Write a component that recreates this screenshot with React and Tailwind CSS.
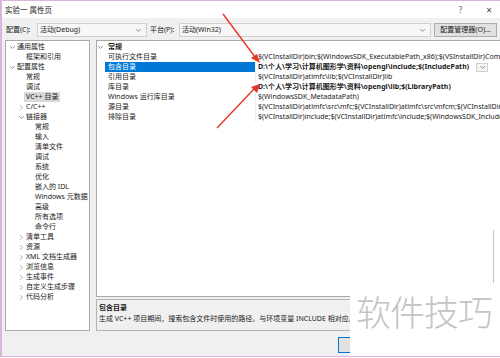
import React from 'react';

const font = { fontFamily: '"Noto Sans", "Noto Sans CJK SC", sans-serif' };

const Chevron = ({ dir = 'down', className = '' }) => (
  <svg width="7" height="7" viewBox="0 0 8 8" className={className}>
    {dir === 'down' ? (
      <path d="M1.5 2.5 L4 5 L6.5 2.5" fill="none" stroke="#777" strokeWidth="1" />
    ) : (
      <path d="M2.5 1.5 L5 4 L2.5 6.5" fill="none" stroke="#999" strokeWidth="1" />
    )}
  </svg>
);

const tree = [
  { lvl: 0, dir: 'down', label: '通用属性' },
  { lvl: 1, label: '框架和引用' },
  { lvl: 0, dir: 'down', label: '配置属性' },
  { lvl: 1, label: '常规' },
  { lvl: 1, label: '调试' },
  { lvl: 1, label: 'VC++ 目录', selected: true },
  { lvl: 1, dir: 'right', label: 'C/C++' },
  { lvl: 1, dir: 'down', label: '链接器' },
  { lvl: 2, label: '常规' },
  { lvl: 2, label: '输入' },
  { lvl: 2, label: '清单文件' },
  { lvl: 2, label: '调试' },
  { lvl: 2, label: '系统' },
  { lvl: 2, label: '优化' },
  { lvl: 2, label: '嵌入的 IDL' },
  { lvl: 2, label: 'Windows 元数据' },
  { lvl: 2, label: '高级' },
  { lvl: 2, label: '所有选项' },
  { lvl: 2, label: '命令行' },
  { lvl: 1, dir: 'right', label: '清单工具' },
  { lvl: 1, dir: 'right', label: '资源' },
  { lvl: 1, dir: 'right', label: 'XML 文档生成器' },
  { lvl: 1, dir: 'right', label: '浏览信息' },
  { lvl: 1, dir: 'right', label: '生成事件' },
  { lvl: 1, dir: 'right', label: '自定义生成步骤' },
  { lvl: 1, dir: 'right', label: '代码分析' },
];

const pad = ['pl-[2px]', 'pl-[11px]', 'pl-[20px]'];

const props = [
  { name: '可执行文件目录', value: '$(VCInstallDir)bin;$(WindowsSDK_ExecutablePath_x86);$(VSInstallDir)Common7\\Tools\\bin;$(VSInstallDir)Common7\\tools' },
  { name: '包含目录', value: 'D:\\个人\\学习\\计算机图形学\\资料\\opengl\\include;$(IncludePath)', bold: true, selected: true },
  { name: '引用目录', value: '$(VCInstallDir)atlmfc\\lib;$(VCInstallDir)lib' },
  { name: '库目录', value: 'D:\\个人\\学习\\计算机图形学\\资料\\opengl\\lib;$(LibraryPath)', bold: true },
  { name: 'Windows 运行库目录', value: '$(WindowsSDK_MetadataPath)' },
  { name: '源目录', value: '$(VCInstallDir)atlmfc\\src\\mfc;$(VCInstallDir)atlmfc\\src\\mfcm;$(VCInstallDir)atlmfc\\src\\atl;$(VCInstallDir)crt\\src' },
  { name: '排除目录', value: '$(VCInstallDir)include;$(VCInstallDir)atlmfc\\include;$(WindowsSDK_IncludePath);$(MSBuildToolsPath32)' },
];

export default function App() {
  return (
    <div style={font} className="relative w-[500px] h-[357px] overflow-hidden border-t border-b border-l-2 border-[#dbb6db] bg-[#f0f0f0] text-[7px] leading-[10px] text-[#1a1a1a]">
      {/* title bar */}
      <div className="h-[17px] bg-white flex items-center pl-[3px] pr-[8px]">
        <span className="text-[7.5px]">实验一 属性页</span>
        <span className="ml-auto text-[#555] text-[8px]">?</span>
        <span className="ml-[24px] text-[#444] text-[10px]">×</span>
      </div>

      {/* config row */}
      <div className="mt-[5px] h-[14px] flex items-center pl-[4px]">
        <span className="w-[31px]">配置(C):</span>
        <div className="w-[110px] h-[14px] border border-[#d0d0d0] bg-[#f7f7f7] flex items-center pl-[2px] pr-[4px]">
          <span>活动(Debug)</span>
          <Chevron className="ml-auto" />
        </div>
        <span className="ml-[3px] w-[29px]">平台(P):</span>
        <div className="w-[252px] h-[14px] border border-[#d0d0d0] bg-[#f7f7f7] flex items-center pl-[2px] pr-[4px]">
          <span>活动(Win32)</span>
          <Chevron className="ml-auto" />
        </div>
        <div className="ml-[3px] w-[63px] h-[14px] border border-[#adadad] bg-[#e1e1e1] flex items-center justify-center">
          配置管理器(O)...
        </div>
      </div>

      {/* main */}
      <div className="mt-[3px] flex pl-[3px] gap-[6px]">
        <div className="w-[85px] h-[291px] shrink-0 border border-[#a9a9a9] bg-white pt-[1px]">
          {tree.map((t, i) => (
            <div key={i} className={`h-[10px] flex items-center whitespace-nowrap ${pad[t.lvl]}`}>
              <span className="w-[9px] flex justify-center">{t.dir && <Chevron dir={t.dir} />}</span>
              <span className={t.selected ? '-ml-[2px] px-[2px] bg-[#d9d9d9]' : ''}>{t.label}</span>
            </div>
          ))}
        </div>

        <div className="w-[410px] shrink-0 flex flex-col gap-[2px]">
          <div className="h-[257px] border border-[#a9a9a9] bg-white pt-[1px]">
            <div className="h-[10px] flex items-center">
              <span className="w-[7px] flex justify-center"><Chevron /></span>
              <span className="ml-[4px] font-bold">常规</span>
            </div>
            {props.map((p, i) => (
              <div key={i} className="h-[10px] flex items-center whitespace-nowrap">
                <div className={`ml-[8px] w-[150px] shrink-0 h-[10px] pl-[3px] flex items-center ${p.selected ? 'bg-[#0078d7] text-white' : ''}`}>
                  {p.name}
                </div>
                <div className="w-px h-[10px] shrink-0 bg-[#f0f0f0]" />
                <div className={`relative flex-1 min-w-0 pl-[2px] h-[10px] overflow-hidden ${p.bold ? 'font-bold' : ''}`}>
                  <span>{p.value}</span>
                  {p.selected && (
                    <span className="absolute right-[17px] top-[0.5px] w-[12px] h-[9px] border border-[#d0d0d0] bg-[#f5f5f5] flex items-center justify-center">
                      <Chevron />
                    </span>
                  )}
                </div>
              </div>
            ))}
          </div>
          <div className="h-[32px] border border-[#b4b4b4] bg-[#f0f0f0] pl-[2px] pt-[3px]">
            <div className="font-bold">包含目录</div>
            <div className="mt-[1px] whitespace-nowrap">生成 VC++ 项目期间，搜索包含文件时使用的路径。与环境变量 INCLUDE 相对应。</div>
          </div>
        </div>
      </div>

      {/* bottom buttons */}
      <div className="mt-[6px] flex gap-[6px] pl-[336px]">
        <div className="w-[60px] h-[16px] border border-[#0078d7] bg-[#e1e1e1] flex items-center justify-center">确定</div>
        <div className="w-[60px] h-[16px] border border-[#adadad] bg-[#e1e1e1] flex items-center justify-center">取消</div>
      </div>

      {/* red arrows */}
      <svg className="absolute left-0 top-0 pointer-events-none" width="500" height="358">
        <line x1="221" y1="13" x2="253" y2="56" stroke="#e8352b" strokeWidth="1.4" />
        <polygon points="258,62 249,57 255,53" fill="#e8352b" />
        <line x1="215" y1="127" x2="252" y2="88" stroke="#e8352b" strokeWidth="1.4" />
        <polygon points="258,83 255,92 249,86" fill="#e8352b" />
      </svg>

      {/* watermark */}
      <div className="absolute left-[491px] top-[229px] w-px h-[53px] bg-[#dbb6db]" />
      <div className="absolute left-[348px] top-[282px] w-[152px] h-[76px] bg-white flex items-start pl-[6px] pt-[8px]">
        <span className="text-[35px] leading-[40px] text-[#c4c4c4] tracking-[-1px]" style={{ fontFamily: '"Noto Sans CJK SC", sans-serif', fontWeight: 300 }}>软件技巧</span>
      </div>
    </div>
  );
}
